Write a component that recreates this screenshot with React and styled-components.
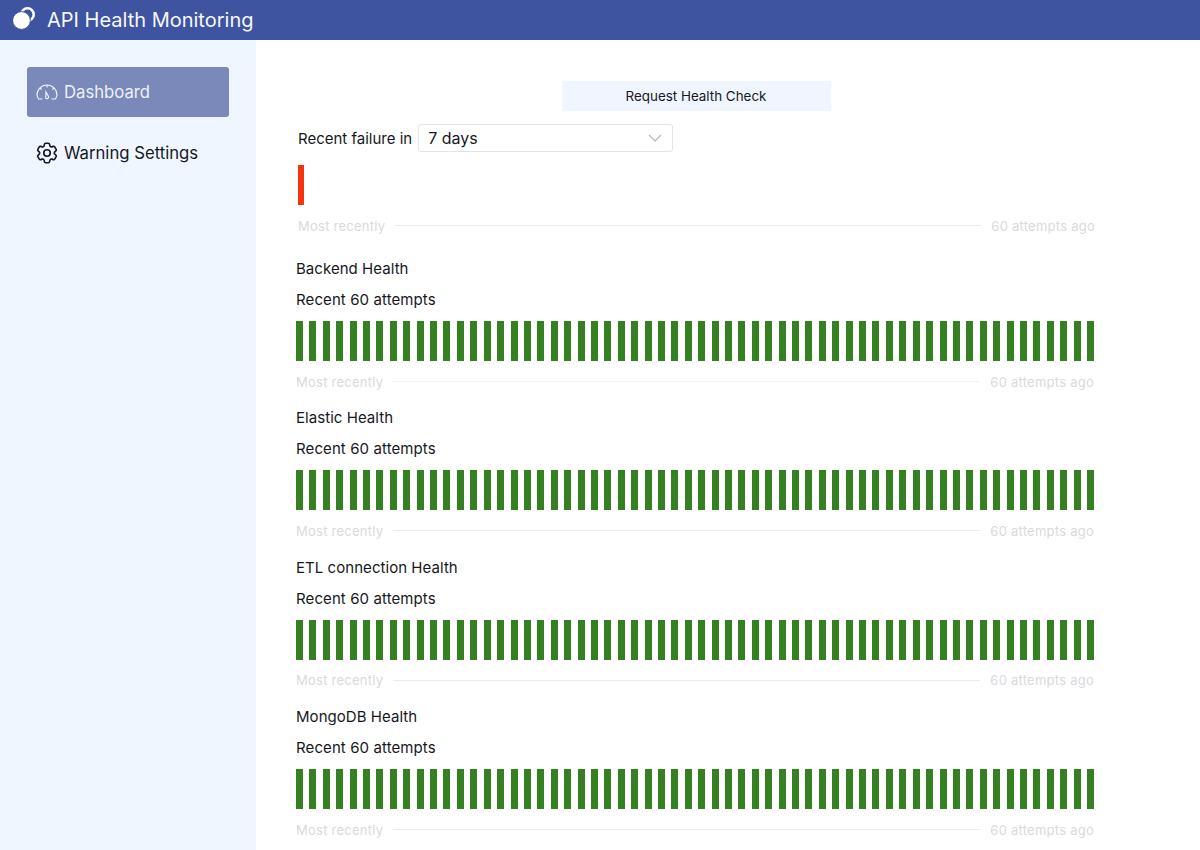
import React from 'react';
import styled, { createGlobalStyle } from 'styled-components';
import { HiOutlineCog6Tooth } from 'react-icons/hi2';

const GlobalStyle = createGlobalStyle`
  html, body {
    margin: 0;
    padding: 0;
    height: 850px;
    overflow: hidden;
    background: #fff;
    font-family: Inter, "Liberation Sans", sans-serif;
    color: #16181d;
  }
`;

const Page = styled.div`
  display: flex;
  flex-direction: column;
  height: 850px;
  overflow: hidden;
`;

const TopBar = styled.header`
  display: flex;
  align-items: center;
  flex: 0 0 40px;
  gap: 11px;
  padding-left: 13px;
  background: #3f54a0;
  color: #f5f7fc;
  font-size: 20px;
`;

const Body = styled.div`
  display: flex;
  flex: 1;
  min-height: 0;
`;

const Sidebar = styled.nav`
  flex: 0 0 256px;
  box-sizing: border-box;
  padding: 27px 27px 0;
  background: #eff6ff;
  display: flex;
  flex-direction: column;
  gap: 11px;
`;

const NavItem = styled.div`
  display: flex;
  align-items: center;
  gap: 6px;
  width: 201.5px;
  height: 50px;
  box-sizing: border-box;
  padding-left: 8px;
  border-radius: 3px;
  font-size: 16.7px;
  background: ${(p) => (p.$active ? '#7a88ba' : 'transparent')};
  color: ${(p) => (p.$active ? '#eef1f8' : '#16181d')};
`;

const GaugeIcon = styled.svg`
  width: 23px;
  height: 18px;
  fill: none;
  stroke: currentColor;
  stroke-width: 1.2;
`;

const CogIcon = styled(HiOutlineCog6Tooth)`
  width: 26px;
  height: 26px;
  margin: 0 -1.5px;
`;

const Main = styled.main`
  flex: 1;
  box-sizing: border-box;
  padding: 41px 106px 0 40px;
  min-width: 0;
`;

const ButtonRow = styled.div`
  display: flex;
  justify-content: center;
  padding-left: 2px;
  margin-bottom: 13px;
`;

const CheckButton = styled.button`
  width: 269px;
  height: 30px;
  border: 0;
  padding: 0 0 1px;
  background: #eff6ff;
  color: #16181d;
  font: 13.4px Inter, "Liberation Sans", sans-serif;
`;

const FailureBlock = styled.section`
  padding-left: 2px;
  margin-right: -1px;
  margin-bottom: 25px;
`;

const FilterRow = styled.div`
  display: flex;
  align-items: center;
  gap: 6px;
  font-size: 15px;
  margin-bottom: 13px;
`;

const SelectBox = styled.div`
  display: flex;
  align-items: center;
  justify-content: space-between;
  width: 255px;
  height: 28px;
  box-sizing: border-box;
  padding: 0 10px 0 9px;
  border: 1px solid #e2e4e8;
  border-radius: 3px;
  font-size: 16px;
`;

const Chevron = styled.svg`
  width: 14px;
  height: 14px;
  fill: none;
  stroke: #b3b6bc;
  stroke-width: 1.2;
`;

const Bars = styled.div`
  display: flex;
  justify-content: space-between;
  height: 40px;
`;

const Bar = styled.div`
  width: 7px;
  height: 100%;
  background: #358020;
`;

const FailureBar = styled(Bar)`
  width: 6.7px;
  margin-left: -0.5px;
  background: #f5340f;
`;

const Legend = styled.div`
  display: flex;
  align-items: center;
  gap: 10px;
  margin-top: 12px;
  height: 17px;
  font-size: 13px;
  letter-spacing: 0.25px;
  color: #d9dadd;
  white-space: nowrap;
`;

const Rule = styled.div`
  flex: 1;
  height: 1px;
  background: ${(p) => (p.$faint ? '#f2f3f4' : '#e9eaec')};
`;

const Section = styled.section`
  height: 149.4px;
`;

const Title = styled.div`
  font-size: 15px;
  line-height: 20px;
  letter-spacing: 0.05px;
`;

const SubTitle = styled(Title)`
  margin-top: 11px;
  margin-bottom: 11px;
  letter-spacing: 0.1px;
`;

const Logo = () => (
  <svg width="23" height="26" viewBox="0 0 23 26">
    <circle cx="14.5" cy="7.5" r="6.2" fill="none" stroke="#fff" strokeWidth="2.6" />
    <circle cx="8.5" cy="13.5" r="8.9" fill="#fff" stroke="#3f54a0" strokeWidth="1" />
  </svg>
);

const Gauge = () => (
  <GaugeIcon viewBox="0 0 23 18">
    <path d="M7.5 16H3.6A10 10 0 0 1 2 12a10 10 0 0 1 20 0 10 10 0 0 1-1.6 4H16.5" />
    <path d="M12 2v2.5M5 5l1.7 1.7M19 5l-1.7 1.7" />
    <path d="M11 9l2.5 4.5a1.6 1.6 0 0 1-2.8 1.5z" />
  </GaugeIcon>
);

const greenBars = Array.from({ length: 60 }, (_, i) => i);
const services = ['Backend Health', 'Elastic Health', 'ETL connection Health', 'MongoDB Health'];

export default function App() {
  return (
    <Page>
      <GlobalStyle />
      <TopBar>
        <Logo />
        API Health Monitoring
      </TopBar>
      <Body>
        <Sidebar>
          <NavItem $active>
            <Gauge />
            Dashboard
          </NavItem>
          <NavItem>
            <CogIcon />
            Warning Settings
          </NavItem>
        </Sidebar>
        <Main>
          <ButtonRow>
            <CheckButton>Request Health Check</CheckButton>
          </ButtonRow>
          <FailureBlock>
            <FilterRow>
              Recent failure in
              <SelectBox>
                7 days
                <Chevron viewBox="0 0 14 14">
                  <path d="M1 4l6 6 6-6" />
                </Chevron>
              </SelectBox>
            </FilterRow>
            <Bars>
              <FailureBar />
            </Bars>
            <Legend>
              Most recently
              <Rule />
              60 attempts ago
            </Legend>
          </FailureBlock>
          {services.map((name, i) => (
            <Section key={name}>
              <Title>{name}</Title>
              <SubTitle>Recent 60 attempts</SubTitle>
              <Bars>
                {greenBars.map((n) => (
                  <Bar key={n} />
                ))}
              </Bars>
              <Legend>
                Most recently
                <Rule $faint={i === 0} />
                60 attempts ago
              </Legend>
            </Section>
          ))}
        </Main>
      </Body>
    </Page>
  );
}
